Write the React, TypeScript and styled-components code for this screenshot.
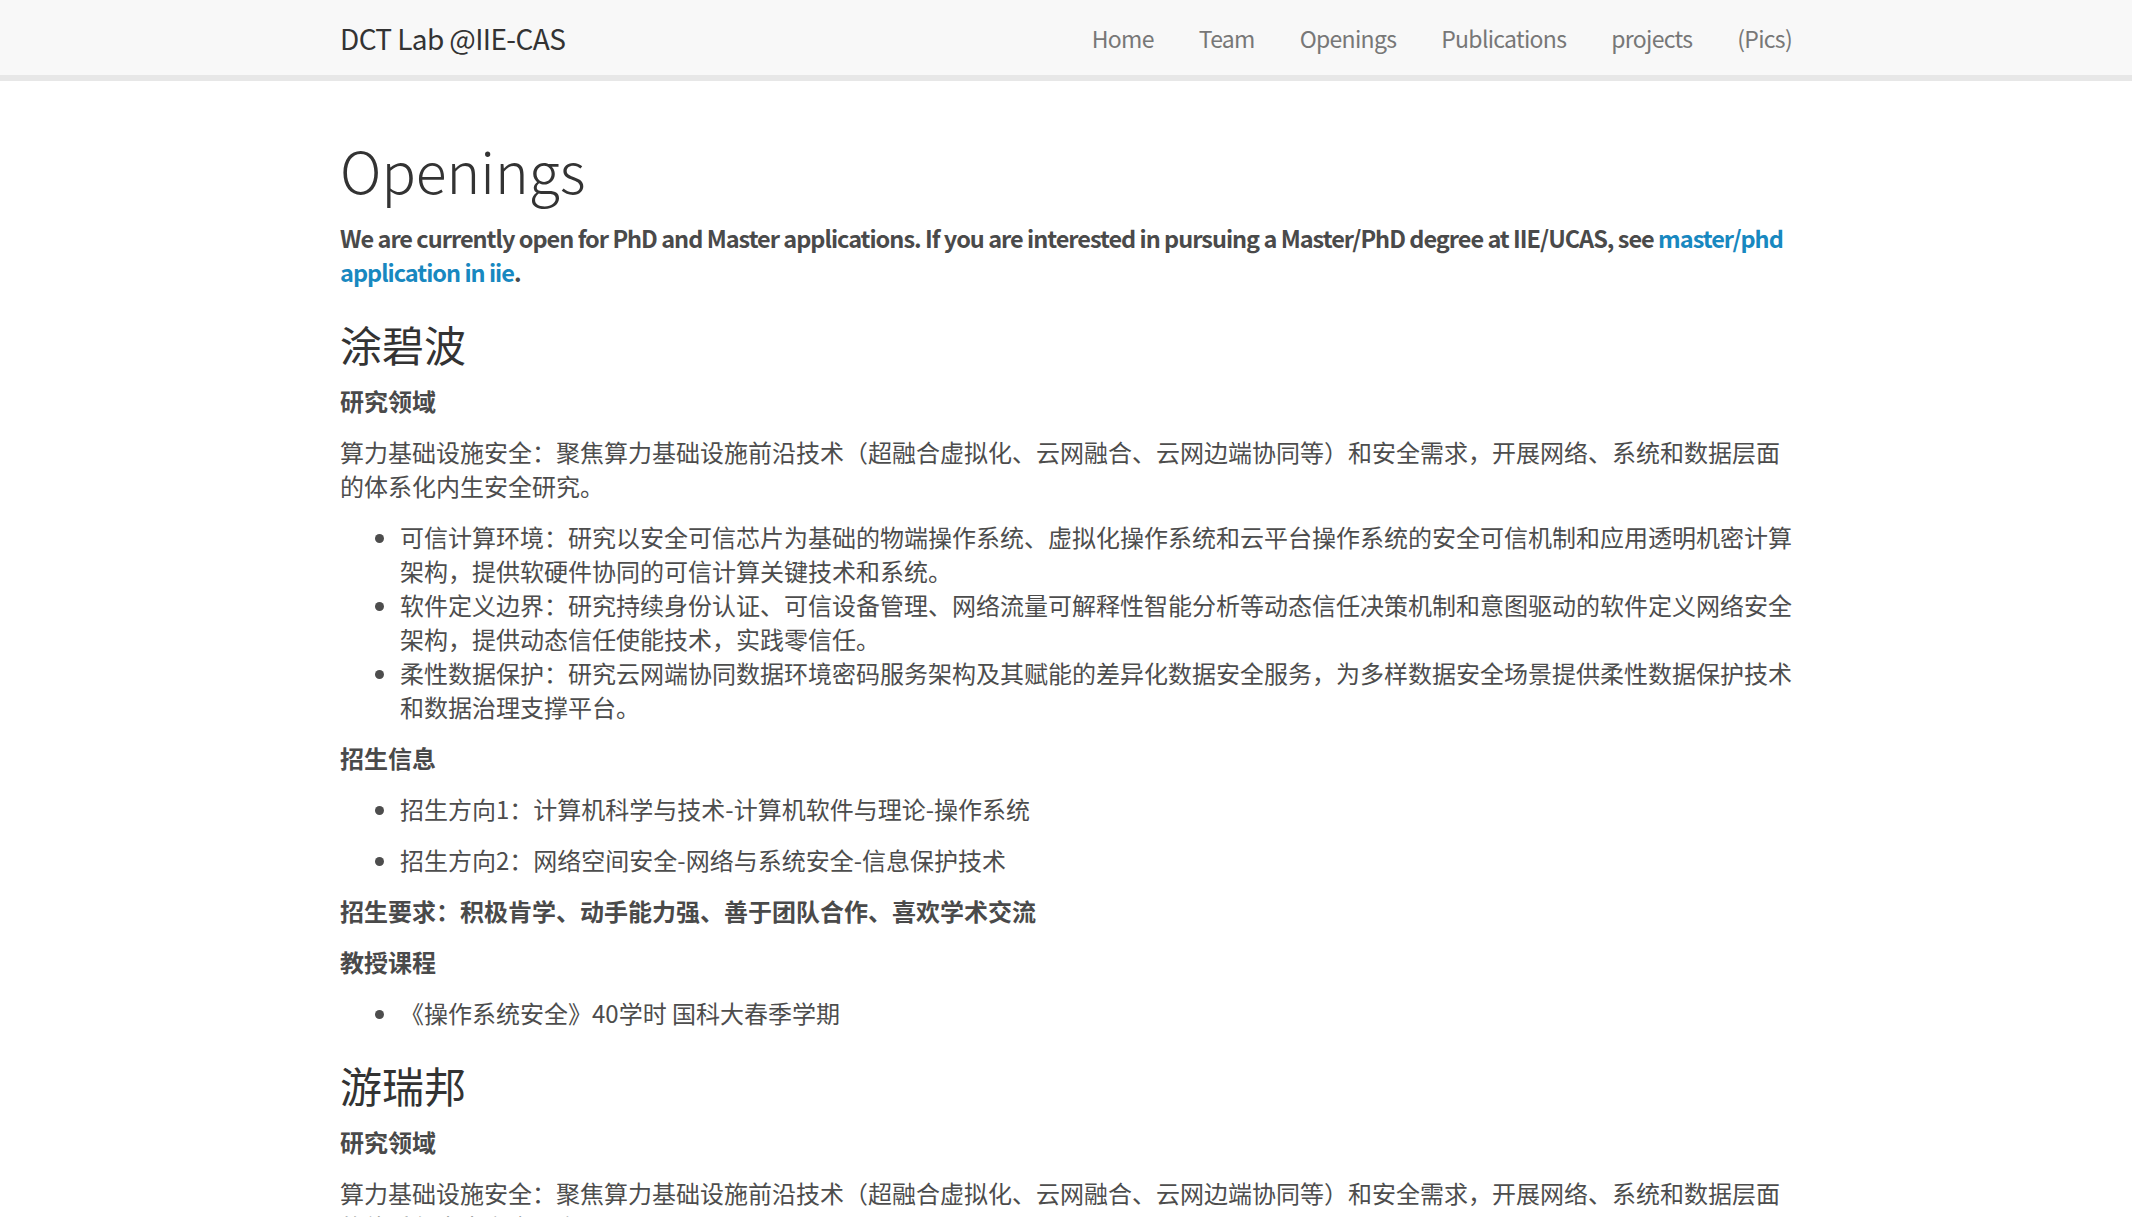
import React from 'react';
import styled, { createGlobalStyle } from 'styled-components';

const GlobalStyle = createGlobalStyle`
    body {
        margin: 0;
        background: #fff;
        font-family: "Noto Sans CJK SC", "Noto Sans", sans-serif;
        color: #4d4d4d;
    }
`;

const navItems = ['Home', 'Team', 'Openings', 'Publications', 'projects', '(Pics)'];

const research = [
    '可信计算环境：研究以安全可信芯片为基础的物端操作系统、虚拟化操作系统和云平台操作系统的安全可信机制和应用透明机密计算架构，提供软硬件协同的可信计算关键技术和系统。',
    '软件定义边界：研究持续身份认证、可信设备管理、网络流量可解释性智能分析等动态信任决策机制和意图驱动的软件定义网络安全架构，提供动态信任使能技术，实践零信任。',
    '柔性数据保护：研究云网端协同数据环境密码服务架构及其赋能的差异化数据安全服务，为多样数据安全场景提供柔性数据保护技术和数据治理支撑平台。',
];

const intro = '算力基础设施安全：聚焦算力基础设施前沿技术（超融合虚拟化、云网融合、云网边端协同等）和安全需求，开展网络、系统和数据层面的体系化内生安全研究。';

export default function App() {
    return (<>
        <GlobalStyle />
        <Navbar>
            <NavInner>
                <Brand href="#">DCT Lab @IIE-CAS</Brand>
                <NavList>
                    {navItems.map((item) => <NavLink key={item} href="#">{item}</NavLink>)}
                </NavList>
            </NavInner>
        </Navbar>

        <Main>
            <Title>Openings</Title>
            <Lead>
                We are currently open for PhD and Master applications. If you are interested in pursuing a Master/PhD degree at IIE/UCAS, see <Link href="#">master/phd application in iie</Link>.
            </Lead>

            <Person>涂碧波</Person>
            <Section>研究领域</Section>
            <Para>{intro}</Para>
            <List>
                {research.map((r) => <Item key={r}>{r}</Item>)}
            </List>
            <Section>招生信息</Section>
            <List>
                <Item><Para>招生方向1：计算机科学与技术-计算机软件与理论-操作系统</Para></Item>
                <Item><Para>招生方向2：网络空间安全-网络与系统安全-信息保护技术</Para></Item>
            </List>
            <Section>招生要求：积极肯学、动手能力强、善于团队合作、喜欢学术交流</Section>
            <Section>教授课程</Section>
            <List>
                <Item>《操作系统安全》40学时 国科大春季学期</Item>
            </List>

            <Person>游瑞邦</Person>
            <Section>研究领域</Section>
            <Para>{intro}</Para>
        </Main>
    </>);
}

const Navbar = styled.nav`
    background: #f8f8f8;
    border-bottom: 6px solid #e7e7e7;
`;

const NavInner = styled.div`
    width: 1452px;
    height: 75px;
    margin: 0 auto;
    display: flex;
    align-items: center;
    justify-content: space-between;
`;

const Brand = styled.a`
    font-size: 28px;
    letter-spacing: -0.6px;
    color: #333;
    text-decoration: none;
`;

const NavList = styled.div`
    display: flex;
    gap: 45px;
`;

const NavLink = styled.a`
    font-size: 23px;
    letter-spacing: -0.7px;
    color: #777;
    text-decoration: none;
`;

const Main = styled.main`
    width: 1452px;
    margin: 0 auto;
    padding-top: 57px;
    font-size: 24px;
    line-height: 34px;
`;

const Title = styled.h1`
    margin: 0 0 20px;
    font-size: 57px;
    font-weight: 300;
    line-height: 1.1;
    color: #333;
`;

const Lead = styled.p`
    margin: 0 0 17px;
    font-size: 23.5px;
    font-weight: bold;
    letter-spacing: -1px;
    color: #4a4a4a;
`;

const Link = styled.a`
    color: #1888c0;
    text-decoration: none;
`;

const Person = styled.h2`
    margin: 32px 0 17px;
    font-size: 42px;
    font-weight: 400;
    line-height: 1.1;
    color: #333;
`;

const Section = styled.h4`
    margin: 0 0 17px;
    font-size: 24px;
    font-weight: bold;
    color: #4a4a4a;
`;

const Para = styled.p`
    margin: 0 0 17px;
`;

const List = styled.ul`
    margin: 0 0 17px;
    padding-left: 60px;
`;

const Item = styled.li`
    margin: 0;
`;
